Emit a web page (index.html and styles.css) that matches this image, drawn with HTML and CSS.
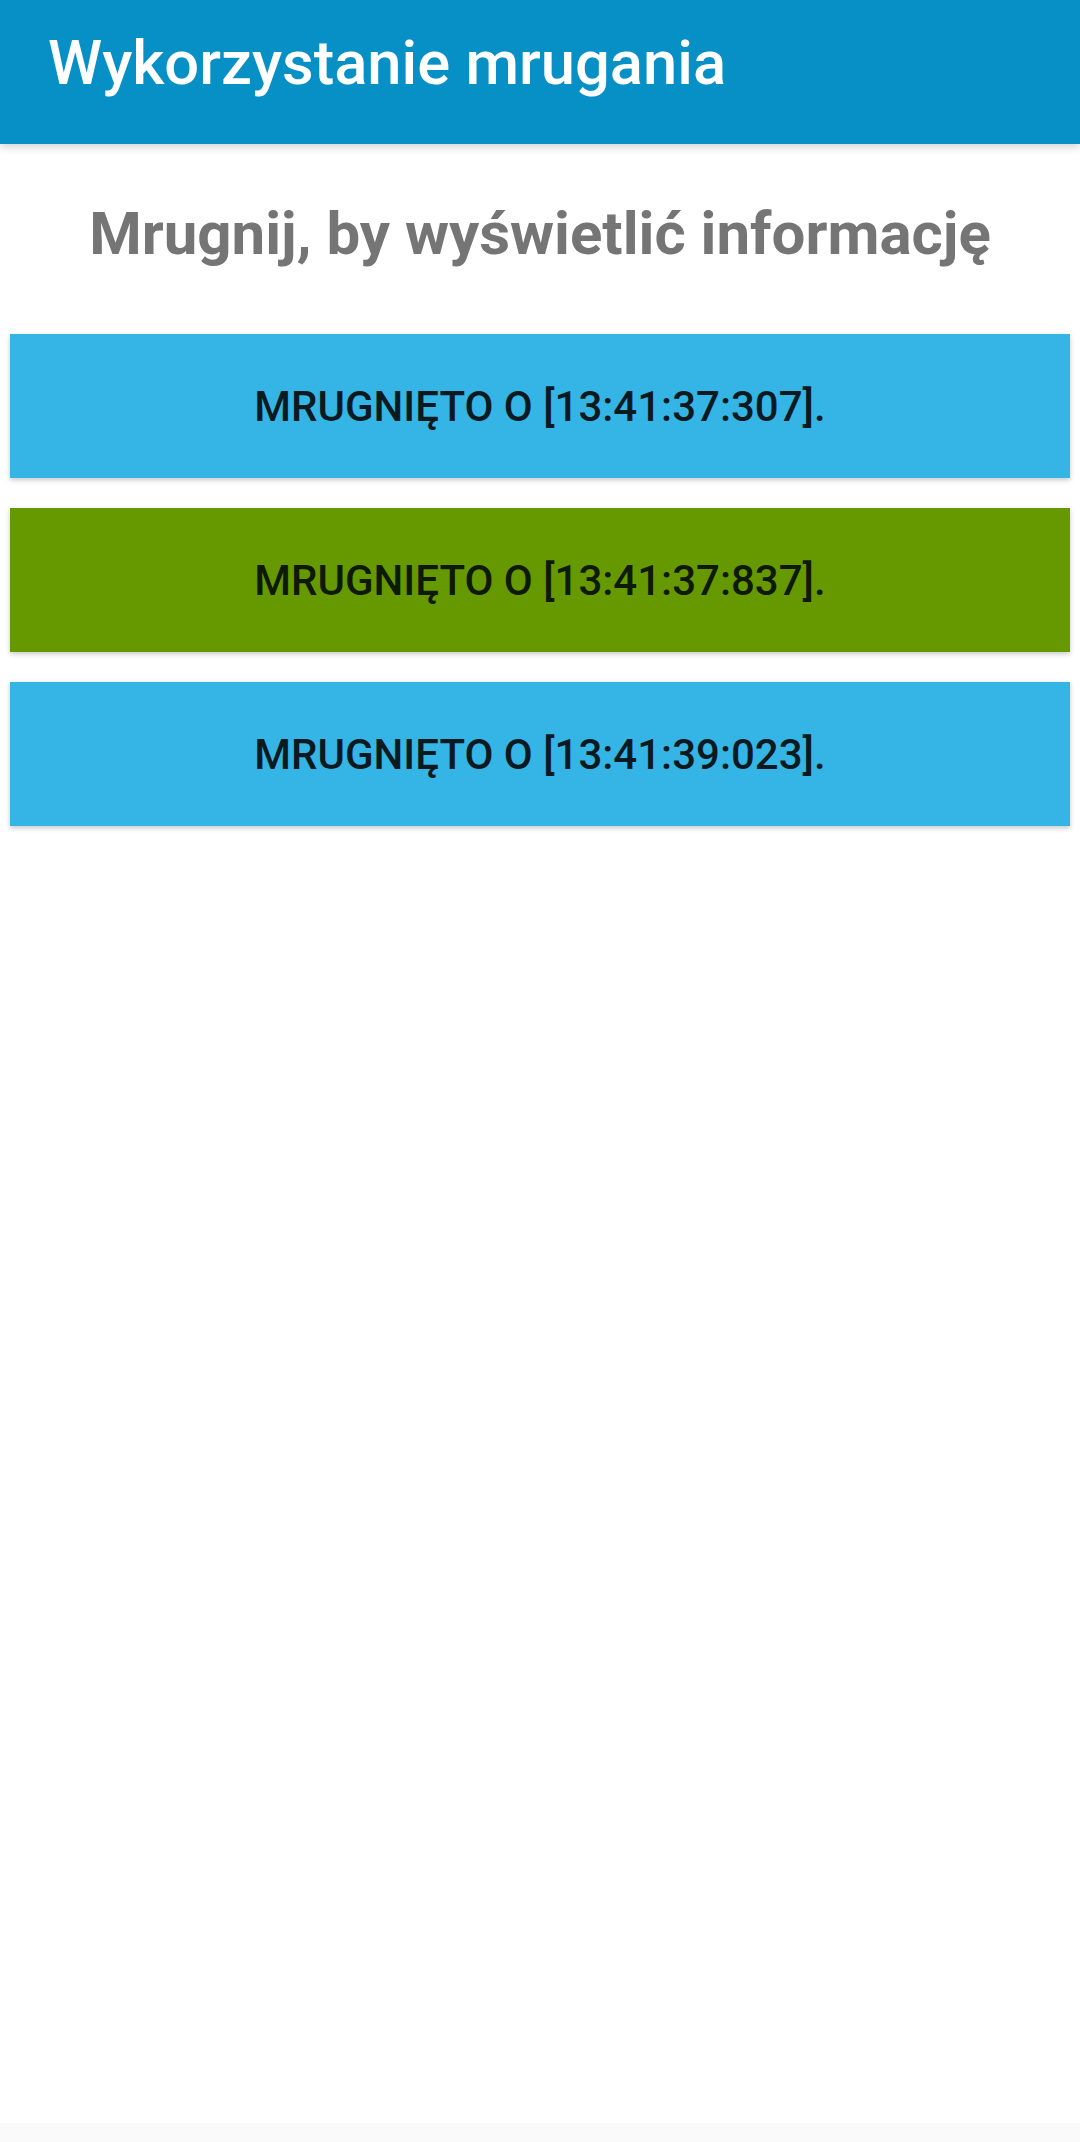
FILE: index.html
```html
<!DOCTYPE html>
<html lang="pl">
<head>
<meta charset="utf-8">
<link rel="stylesheet" href="styles.css">
</head>
<body>
<div class="screen">
  <header class="appbar"><span class="appbar-title">Wykorzystanie mrugania</span></header>
  <main class="content">
    <h1 class="heading">Mrugnij, by wyświetlić informację</h1>
    <div class="list">
      <div class="card card-blue">MRUGNIĘTO O [13:41:37:307].</div>
      <div class="card card-green">MRUGNIĘTO O [13:41:37:837].</div>
      <div class="card card-blue">MRUGNIĘTO O [13:41:39:023].</div>
    </div>
  </main>
  <div class="navstrip"></div>
</div>
</body>
</html>
```
FILE: styles.css
```css
html, body {
  margin: 0;
  padding: 0;
  background: #ffffff;
}
.screen {
  width: 1080px;
  height: 2142px;
  display: flex;
  flex-direction: column;
  font-family: Roboto, "Noto Sans", sans-serif;
  overflow: hidden;
}
.appbar {
  height: 144px;
  box-sizing: border-box;
  background: #0690c6;
  display: flex;
  align-items: flex-start;
  padding: 27px 0 0 48px;
  box-shadow: 0 3px 8px rgba(0,0,0,0.18);
  position: relative;
  z-index: 2;
  flex-shrink: 0;
}
.appbar-title {
  color: #ffffff;
  font-size: 61.5px;
  font-weight: 500;
  line-height: normal;
}
.content {
  flex: 1;
  display: flex;
  flex-direction: column;
}
.heading {
  margin: 0;
  padding-top: 54px;
  height: 136px;
  box-sizing: border-box;
  text-align: center;
  font-size: 60px;
  font-weight: 700;
  color: #757575;
  line-height: 72px;
}
.list {
  display: flex;
  flex-direction: column;
  gap: 30px;
  padding: 0 10px;
  margin-top: 54px;
}
.card {
  height: 144px;
  display: flex;
  align-items: center;
  justify-content: center;
  font-size: 42px;
  font-weight: 500;
  color: #0b1a20;
  box-shadow: 0 2px 5px rgba(0,0,0,0.22);
}
.card-blue { background: #35b5e5; }
.card-green { background: #669900; color: #0e1a05; }
.navstrip {
  height: 19px;
  background: #fafafa;
  flex-shrink: 0;
}
```
